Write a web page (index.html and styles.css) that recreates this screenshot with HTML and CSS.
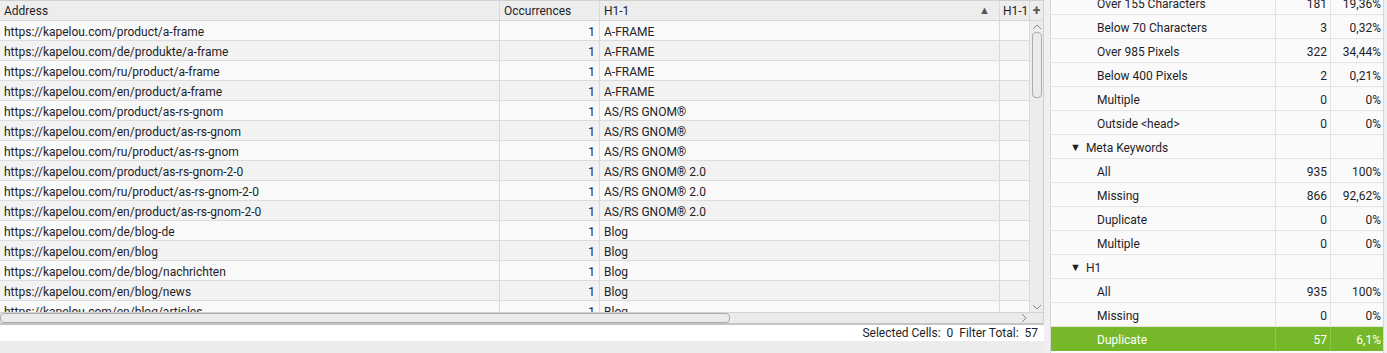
FILE: index.html
```html
<!DOCTYPE html>
<html lang="en">
<head>
  <meta charset="UTF-8" />
  <title>H1 Duplicate</title>
  <link rel="stylesheet" href="styles.css">
</head>
<body>
  <div class="app">

    <!-- Main results table -->
    <div class="main">
      <div class="grid">
        <div class="head">
          <div class="cell c-addr">Address</div>
          <div class="cell c-occ">Occurrences</div>
          <div class="cell c-h1 sorted">H1-1 <span class="sort">&#9650;</span></div>
          <div class="cell c-h1b">H1-1</div>
          <div class="cell c-plus">+</div>
        </div>
        <div class="body">
          <div class="rows" id="rows"></div>
          <div class="vscroll">
            <svg class="arrow" width="10" height="6" viewBox="0 0 10 6"><path d="M1 5 L5 1 L9 5" fill="none" stroke="#8a8a8a" stroke-width="1"/></svg>
            <div class="vthumb"></div>
            <div class="vspace"></div>
            <svg class="arrow" width="10" height="6" viewBox="0 0 10 6"><path d="M1 1 L5 5 L9 1" fill="none" stroke="#8a8a8a" stroke-width="1"/></svg>
          </div>
        </div>
      </div>
      <div class="hscroll">
        <div class="hthumb"></div>
        <svg class="harrow" width="6" height="10" viewBox="0 0 6 10"><path d="M1 1 L5 5 L1 9" fill="none" stroke="#8a8a8a" stroke-width="1"/></svg>
      </div>
      <div class="status">Selected Cells:&nbsp; 0&nbsp; Filter Total:&nbsp; 57</div>
      <div class="foot"></div>
    </div>

    <!-- Overview side panel -->
    <div class="side">
      <div class="tree" id="tree"></div>
    </div>

  </div>

  <script>
    const urls = [
      ["https://kapelou.com/product/a-frame", "A-FRAME"],
      ["https://kapelou.com/de/produkte/a-frame", "A-FRAME"],
      ["https://kapelou.com/ru/product/a-frame", "A-FRAME"],
      ["https://kapelou.com/en/product/a-frame", "A-FRAME"],
      ["https://kapelou.com/product/as-rs-gnom", "AS/RS GNOM®"],
      ["https://kapelou.com/en/product/as-rs-gnom", "AS/RS GNOM®"],
      ["https://kapelou.com/ru/product/as-rs-gnom", "AS/RS GNOM®"],
      ["https://kapelou.com/product/as-rs-gnom-2-0", "AS/RS GNOM® 2.0"],
      ["https://kapelou.com/ru/product/as-rs-gnom-2-0", "AS/RS GNOM® 2.0"],
      ["https://kapelou.com/en/product/as-rs-gnom-2-0", "AS/RS GNOM® 2.0"],
      ["https://kapelou.com/de/blog-de", "Blog"],
      ["https://kapelou.com/en/blog", "Blog"],
      ["https://kapelou.com/de/blog/nachrichten", "Blog"],
      ["https://kapelou.com/en/blog/news", "Blog"],
      ["https://kapelou.com/en/blog/articles", "Blog"]
    ];

    const rows = document.getElementById("rows");
    urls.forEach(([url, h1]) => {
      const row = document.createElement("div");
      row.className = "row";
      row.innerHTML =
        '<div class="cell c-addr">' + url + '</div>' +
        '<div class="cell c-occ num">1</div>' +
        '<div class="cell c-h1">' + h1 + '</div>' +
        '<div class="cell c-h1b"></div>';
      rows.appendChild(row);
    });

    // [label, count, percent, level]  level 0 = group heading
    const items = [
      ["Over 155 Characters", "181", "19,36%", 1],
      ["Below 70 Characters", "3", "0,32%", 1],
      ["Over 985 Pixels", "322", "34,44%", 1],
      ["Below 400 Pixels", "2", "0,21%", 1],
      ["Multiple", "0", "0%", 1],
      ["Outside <head>", "0", "0%", 1],
      ["Meta Keywords", "", "", 0],
      ["All", "935", "100%", 1],
      ["Missing", "866", "92,62%", 1],
      ["Duplicate", "0", "0%", 1],
      ["Multiple", "0", "0%", 1],
      ["H1", "", "", 0],
      ["All", "935", "100%", 1],
      ["Missing", "0", "0%", 1],
      ["Duplicate", "57", "6,1%", 1, true]
    ];

    const tree = document.getElementById("tree");
    items.forEach(([label, count, pct, level, selected]) => {
      const row = document.createElement("div");
      row.className = "trow" + (selected ? " selected" : "");
      const name = document.createElement("div");
      name.className = level === 0 ? "tname group" : "tname";
      if (level === 0) {
        const caret = document.createElement("span");
        caret.className = "caret";
        caret.textContent = "▼";
        name.appendChild(caret);
      }
      name.appendChild(document.createTextNode(label));
      row.appendChild(name);
      row.insertAdjacentHTML("beforeend",
        '<div class="tcount">' + count + '</div><div class="tpct">' + pct + '</div>');
      tree.appendChild(row);
    });
  </script>
</body>
</html>
```

FILE: styles.css
```css
* {
  box-sizing: border-box;
}
body {
  margin: 0;
  padding: 0;
  background: #f0f0f0;
  font-family: Roboto, 'Liberation Sans', sans-serif;
  font-size: 12px;
  color: #1e1e28;
  overflow: hidden;
}
.app {
  display: flex;
  height: 353px;
}
.main {
  width: 1044px;
  display: flex;
  flex-direction: column;
}
.grid {
  height: 312px;
  display: flex;
  flex-direction: column;
  overflow: hidden;
  background: #f7f7f7;
}
.head {
  display: flex;
  height: 21px;
  flex-shrink: 0;
  background: #ededed;
  border-top: 1px solid #d0d0d0;
  border-bottom: 1px solid #d6d6d6;
}
.head .cell {
  padding-top: 1px;
  line-height: 18px;
}
.cell {
  padding: 0 4px;
  border-right: 1px solid #d9d9d9;
  white-space: nowrap;
  overflow: hidden;
  flex-shrink: 0;
}
.c-addr { width: 500px; }
.c-occ { width: 100px; }
.c-h1 { width: 400px; }
.c-h1b { width: 30px; padding-left: 3px; }
.head .c-plus {
  width: 14px;
  padding: 0;
  text-align: center;
  font-weight: bold;
  font-size: 14px;
  color: #555;
  border-right: 1px solid #cfcfcf;
}
.num {
  text-align: right;
}
.sorted {
  display: flex;
  justify-content: space-between;
}
.sort {
  font-size: 11px;
  color: #555;
  padding-right: 5px;
}
.body {
  display: flex;
  flex: 1;
  min-height: 0;
}
.rows {
  width: 1030px;
  overflow: hidden;
}
.row {
  display: flex;
  height: 20px;
  border-bottom: 1px solid #dcdcdc;
  background: #f9f9f9;
}
.row .cell {
  padding-top: 3px;
  line-height: 16px;
}
.row:nth-child(even) {
  background: #f2f2f2;
}
.vscroll {
  width: 14px;
  background: #ececec;
  border-right: 1px solid #cfcfcf;
  display: flex;
  flex-direction: column;
  align-items: center;
  padding: 3px 0 2px;
  gap: 2px;
}
.vthumb {
  width: 10px;
  height: 66px;
  border: 1px solid #ababab;
  border-radius: 4px;
  background: #ebebeb;
  flex-shrink: 0;
}
.vspace {
  flex: 1;
}
.hscroll {
  height: 13px;
  background: #ebebeb;
  border-top: 1px solid #d2d2d2;
  border-bottom: 2px solid #c4c4c4;
  border-right: 1px solid #cfcfcf;
  display: flex;
  align-items: center;
  justify-content: space-between;
  padding-right: 16px;
}
.hthumb {
  width: 730px;
  height: 10px;
  border: 1px solid #ababab;
  border-radius: 4px;
  background: #ebebeb;
}
.status {
  height: 16px;
  padding-top: 1px;
  line-height: 15px;
  background: #ffffff;
  text-align: right;
  padding-right: 6px;
}
.foot {
  flex: 1;
  background: #ececec;
}
.side {
  flex: 1;
  margin-left: 6px;
  overflow: hidden;
  background: #fafafa;
  border-left: 1px solid #d6d6d6;
  margin-right: 3px;
  border-right: 1px solid #d6d6d6;
}
.tree {
  margin-top: -9px;
}
.trow {
  display: flex;
  height: 24px;
  border-bottom: 1px solid #e2e2e2;
}
.trow > div {
  padding-top: 3px;
  line-height: 20px;
}
.tname {
  width: 225px;
  padding-left: 46px;
  border-right: 1px solid #e2e2e2;
  white-space: nowrap;
}
.tname.group {
  padding-left: 19px;
}
.caret {
  font-size: 11px;
  margin-right: 5px;
  display: inline-block;
  vertical-align: top;
}
.tcount {
  width: 55px;
  text-align: right;
  padding-right: 3px;
  border-right: 1px solid #e2e2e2;
}
.tpct {
  flex: 1;
  text-align: right;
  padding-right: 2px;
}
.trow.selected {
  background: #76b82a;
  color: #fff;
  border-bottom-color: #76b82a;
}
.trow.selected .tname,
.trow.selected .tcount {
  border-right-color: #8cc84a;
}
```
